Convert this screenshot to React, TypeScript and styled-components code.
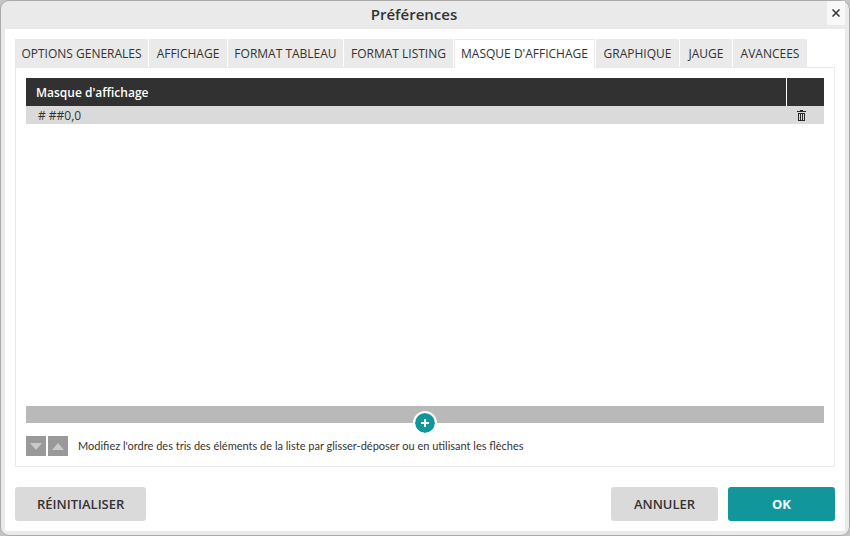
import React, { useState } from "react";
import styled, { createGlobalStyle } from "styled-components";

const GlobalStyle = createGlobalStyle`
  * { box-sizing: border-box; }
  body {
    margin: 0;
    background: #c4c4c4;
    color: #333;
    font-family: "Open Sans", "Noto Sans", sans-serif;
    font-size: 12px;
  }
  button { font: inherit; color: inherit; border: 0; padding: 0; cursor: pointer; }
`;

const Dialog = styled.main`
  display: flex;
  flex-direction: column;
  min-height: 100vh;
  padding: 0 4px 4px;
  background: #eaeaea;
  border: 1px solid #aaa;
  border-radius: 9px;
`;

const TitleBar = styled.header`
  display: grid;
  grid-template-columns: 1fr auto 1fr;
  height: 28px;
`;

const Title = styled.h1`
  grid-column: 2;
  margin: 0;
  padding-right: 22px;
  font-size: 15px;
  font-weight: 600;
  line-height: 27px;
`;

const CloseButton = styled.button`
  justify-self: end;
  display: grid;
  place-items: center;
  width: 18px;
  height: 24px;
  background: #f8f8f8;
`;

const Content = styled.div`
  flex: 1;
  display: flex;
  flex-direction: column;
  padding: 10px;
  background: #fff;
`;

const TabList = styled.div`
  display: flex;
  gap: 1px;
`;

const Tab = styled.button<{ $active: boolean; $basis: number }>`
  position: relative;
  flex: 0 0 ${(p) => p.$basis}px;
  height: 29px;
  margin-bottom: ${(p) => (p.$active ? "-1px" : "0")};
  background: ${(p) => (p.$active ? "#fff" : "#eaeaea")};
  border: 1px solid #eaeaea;
  border-bottom-width: 0;
  line-height: 28px;
  white-space: nowrap;
  display: flex;
  justify-content: center;
`;

const Panel = styled.section`
  flex: 1;
  display: flex;
  flex-direction: column;
  margin-top: -1px;
  padding: 10px;
  border: 1px solid #eaeaea;
`;

const MaskTable = styled.table`
  width: 100%;
  border-collapse: separate;
  border-spacing: 0;
  table-layout: fixed;
`;

const HeadCell = styled.th<{ $action?: boolean }>`
  height: 28px;
  width: ${(p) => (p.$action ? "38px" : "auto")};
  padding: 0 10px;
  background: #313131;
  border-left: ${(p) => (p.$action ? "1px solid #fff" : "0")};
  color: #fff;
  font-weight: 600;
  text-align: left;
`;

const Cell = styled.td<{ $action?: boolean }>`
  height: 18px;
  padding: ${(p) => (p.$action ? "0 11px" : "1px 12px 0")};
  background: #dadada;
  line-height: 17px;
`;

const DeleteButton = styled.button`
  display: block;
  background: none;
  svg { display: block; }
`;

const AddBar = styled.div`
  position: relative;
  height: 17px;
  margin-top: auto;
  background: #b9b9b9;
`;

const AddButton = styled.button`
  position: absolute;
  left: 50%;
  top: 100%;
  transform: translate(-50%, -50%);
  display: grid;
  place-items: center;
  width: 24px;
  height: 24px;
  background: #11969c;
  background-clip: padding-box;
  border: 2px solid #fff;
  border-radius: 50%;
`;

const OrderRow = styled.div`
  display: flex;
  align-items: center;
  gap: 2px;
  margin-top: 13px;
`;

const OrderButton = styled.button`
  display: grid;
  place-items: center;
  width: 20px;
  height: 20px;
  background: #999;
`;

const Hint = styled.p`
  margin: 0 0 0 8px;
  font-family: Lato, "Open Sans", sans-serif;
  font-size: 11px;
  line-height: 20px;
`;

const Footer = styled.footer`
  display: flex;
  gap: 10px;
  margin-top: 20px;
`;

const ActionButton = styled.button<{ $primary?: boolean; $start?: boolean }>`
  height: 34px;
  min-width: 107px;
  padding: 0 22px;
  margin-right: ${(p) => (p.$start ? "auto" : "0")};
  background: ${(p) => (p.$primary ? "#11969c" : "#dadada")};
  border-radius: 3px;
  color: ${(p) => (p.$primary ? "#fff" : "#333")};
  font-size: 13px;
  font-weight: ${(p) => (p.$primary ? 700 : 600)};
`;

const tabs = [
  { label: "OPTIONS GENERALES", basis: 133 },
  { label: "AFFICHAGE", basis: 78 },
  { label: "FORMAT TABLEAU", basis: 115 },
  { label: "FORMAT LISTING", basis: 109 },
  { label: "MASQUE D'AFFICHAGE", basis: 141 },
  { label: "GRAPHIQUE", basis: 83 },
  { label: "JAUGE", basis: 52 },
  { label: "AVANCEES", basis: 74 },
];

export default function App() {
  const [active, setActive] = useState(4);
  return (
    <>
      <GlobalStyle />
      <Dialog role="dialog" aria-labelledby="title">
        <TitleBar>
          <Title id="title">Préférences</Title>
          <CloseButton aria-label="Fermer">
            <svg width="8" height="8" viewBox="0 0 8 8" stroke="#333" strokeWidth="1.5">
              <path d="M.5.5l7 7M7.5.5l-7 7" />
            </svg>
          </CloseButton>
        </TitleBar>
        <Content>
          <TabList role="tablist">
            {tabs.map((tab, i) => (
              <Tab
                key={tab.label}
                role="tab"
                aria-selected={i === active}
                $active={i === active}
                $basis={tab.basis}
                onClick={() => setActive(i)}
              >
                {tab.label}
              </Tab>
            ))}
          </TabList>
          <Panel role="tabpanel">
            <MaskTable>
              <thead>
                <tr>
                  <HeadCell scope="col">Masque d'affichage</HeadCell>
                  <HeadCell scope="col" $action aria-label="Supprimer" />
                </tr>
              </thead>
              <tbody>
                <tr>
                  <Cell># ##0,0</Cell>
                  <Cell $action>
                    <DeleteButton aria-label="Supprimer le masque">
                      <svg width="9" height="11" viewBox="0 0 9 11" fill="#282828" shapeRendering="crispEdges">
                        <path
                          d="M3 0h3v1h3v1H0V1h3zM1 3h7v8H1zM2 4v6h1V4zM4 4v6h1V4zM6 4v6h1V4z"
                          fillRule="evenodd"
                        />
                      </svg>
                    </DeleteButton>
                  </Cell>
                </tr>
              </tbody>
            </MaskTable>
            <AddBar>
              <AddButton aria-label="Ajouter un masque">
                <svg width="8" height="8" viewBox="0 0 8 8" fill="#fff">
                  <path d="M3 0h2v3h3v2H5v3H3V5H0V3h3z" />
                </svg>
              </AddButton>
            </AddBar>
            <OrderRow>
              <OrderButton aria-label="Descendre">
                <svg width="12" height="7" viewBox="0 0 12 7" fill="#c9c9c9">
                  <path d="M0 0h12L6 7z" />
                </svg>
              </OrderButton>
              <OrderButton aria-label="Monter">
                <svg width="12" height="7" viewBox="0 0 12 7" fill="#c9c9c9">
                  <path d="M0 7h12L6 0z" />
                </svg>
              </OrderButton>
              <Hint>Modifiez l'ordre des tris des éléments de la liste par glisser-déposer ou en utilisant les flèches</Hint>
            </OrderRow>
          </Panel>
          <Footer>
            <ActionButton $start>RÉINITIALISER</ActionButton>
            <ActionButton>ANNULER</ActionButton>
            <ActionButton $primary>OK</ActionButton>
          </Footer>
        </Content>
      </Dialog>
    </>
  );
}
